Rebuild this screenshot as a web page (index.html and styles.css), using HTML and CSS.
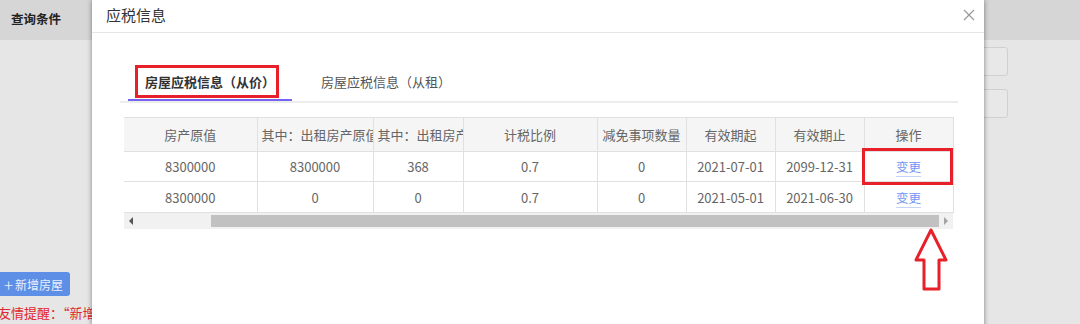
FILE: index.html
```html
<!DOCTYPE html>
<html lang="zh-CN">
<head>
    <meta charset="UTF-8">
    <title>应税信息</title>
    <link rel="stylesheet" href="styles.css">
</head>
<body>
    <!-- page behind the dialog -->
    <div class="page">
        <div class="page-head">查询条件</div>
        <div class="form-area">
            <div class="field"></div>
            <div class="field"></div>
        </div>
        <button class="add-btn"><span class="plus">+</span>新增房屋</button>
        <p class="tip">友情提醒：“新增房屋”后请及时完善房屋应税信息</p>
    </div>

    <!-- dialog -->
    <div class="modal">
        <div class="modal-head">
            <span class="modal-title">应税信息</span>
            <svg class="close" width="12" height="12" viewBox="0 0 12 12">
                <path d="M1 1L11 11M11 1L1 11" stroke="#9a9a9a" stroke-width="1.2" fill="none"/>
            </svg>
        </div>
        <div class="modal-body">
            <div class="tabs">
                <div class="tab active">房屋应税信息（从价）<span class="mark tab-mark"></span></div>
                <div class="tab">房屋应税信息（从租）</div>
            </div>

            <div class="grid-wrap">
                <table class="grid">
                    <colgroup>
                        <col style="width:133px">
                        <col style="width:116px">
                        <col style="width:90px">
                        <col style="width:134px">
                        <col style="width:89px">
                        <col style="width:89px">
                        <col style="width:89px">
                        <col style="width:89px">
                    </colgroup>
                    <thead>
                        <tr>
                            <th>房产原值</th>
                            <th class="clip">其中：出租房产原值</th>
                            <th class="clip">其中：出租房产面积</th>
                            <th>计税比例</th>
                            <th>减免事项数量</th>
                            <th>有效期起</th>
                            <th>有效期止</th>
                            <th>操作</th>
                        </tr>
                    </thead>
                    <tbody>
                        <tr class="row-a">
                            <td>8300000</td>
                            <td>8300000</td>
                            <td>368</td>
                            <td>0.7</td>
                            <td>0</td>
                            <td>2021-07-01</td>
                            <td>2099-12-31</td>
                            <td><a class="op" href="#">变更</a></td>
                        </tr>
                        <tr class="row-b">
                            <td>8300000</td>
                            <td>0</td>
                            <td>0</td>
                            <td>0.7</td>
                            <td>0</td>
                            <td>2021-05-01</td>
                            <td>2021-06-30</td>
                            <td><a class="op" href="#">变更</a></td>
                        </tr>
                    </tbody>
                </table>
                <div class="hscroll">
                    <span class="arrow-left"></span>
                    <div class="thumb"></div>
                    <span class="arrow-right"></span>
                </div>
                <span class="mark cell-mark"></span>
                <svg class="up-arrow" width="36" height="66" viewBox="0 0 36 66">
                    <polygon points="18,3 33,33 26,33 26,62 11,62 11,33 3,33" fill="#fff" stroke="#e8202a" stroke-width="3" stroke-linejoin="round"/>
                </svg>
            </div>
        </div>
    </div>
</body>
</html>
```

FILE: styles.css
```css
body {
    margin: 0;
    font-family: "Noto Sans CJK SC", "Noto Sans", sans-serif;
    background-color: #e6e6e6;
    overflow: hidden;
    height: 324px;
    position: relative;
}

.page {
    height: 324px;
}

.page-head {
    height: 40px;
    line-height: 38px;
    padding-left: 11px;
    background-color: #d6d6d6;
    font-size: 12.5px;
    font-weight: bold;
    color: #222;
}

.form-area {
    display: flex;
    flex-direction: column;
    align-items: flex-end;
    gap: 13px;
    padding: 7px 72px 0 0;
}

.field {
    width: 200px;
    height: 27px;
    border: 1px solid #d0d0d0;
    border-radius: 3px;
    background-color: #e8e8e8;
}

.add-btn {
    display: flex;
    align-items: center;
    margin-top: 154px;
    margin-left: -4px;
    height: 24px;
    width: 74px;
    padding: 0 0 0 8px;
    border: none;
    border-radius: 3px;
    background-color: #5e8fe6;
    color: #e8eefc;
    font-family: inherit;
    font-size: 12px;
}

.plus {
    font-size: 17px;
    font-weight: 300;
    margin-right: 2px;
    line-height: 1;
}

.tip {
    margin: 7px 0 0 -2px;
    font-size: 13px;
    color: #e0282e;
    white-space: nowrap;
}

/* dialog */
.modal {
    position: absolute;
    left: 92px;
    top: 0;
    width: 892px;
    height: 340px;
    background-color: #fff;
    box-shadow: 0 0 5px rgba(0, 0, 0, 0.45);
}

.modal-head {
    height: 33px;
    border-bottom: 1px solid #e6e6e6;
    display: flex;
    align-items: center;
    justify-content: space-between;
    padding: 0 9px 0 14px;
    box-sizing: border-box;
}

.modal-title {
    font-size: 15px;
    color: #333;
    margin-top: -3px;
}

.close {
    margin-top: -3px;
}

.modal-body {
    padding: 0 26px 0 28px;
}

.tabs {
    display: flex;
    gap: 12px;
    margin-top: 32px;
    padding-left: 8px;
    border-bottom: 2px solid #ececec;
}

.tab {
    position: relative;
    height: 36px;
    line-height: 34px;
    padding: 0 17px;
    font-size: 13px;
    color: #555;
    white-space: nowrap;
}

.tab.active {
    font-weight: bold;
    color: #333;
    box-shadow: inset 0 -2px 0 #7466f0;
}

.mark {
    position: absolute;
    border: 3px solid #e8202a;
    box-sizing: border-box;
}

.tab-mark {
    left: 7px;
    top: 0;
    width: 144px;
    height: 33px;
}

.grid-wrap {
    position: relative;
    margin: 14px 5px 0 4px;
    width: 829px;
    overflow: visible;
}

.grid {
    width: 829px;
    table-layout: fixed;
    border-collapse: collapse;
    font-size: 13px;
    color: #666;
}

.grid th,
.grid td {
    border: 1px solid #e0e0e0;
    text-align: center;
    padding: 0 4px;
    white-space: nowrap;
    overflow: hidden;
}

.grid th:first-child,
.grid td:first-child {
    border-left: none;
}

.grid th {
    height: 33px;
    background-color: #f5f5f5;
    font-weight: normal;
}

.grid th.clip {
    text-align: left;
}

.row-a td {
    height: 29px;
}

.row-b td {
    height: 30px;
}

.op {
    color: #6f94f2;
    font-size: 12.5px;
    text-decoration: none;
    border-bottom: 1px solid #c6d4f8;
}

.hscroll {
    display: flex;
    align-items: center;
    height: 16px;
    background-color: #f1f1f1;
}

.arrow-left,
.arrow-right {
    width: 0;
    height: 0;
    border-top: 4px solid transparent;
    border-bottom: 4px solid transparent;
}

.arrow-left {
    border-right: 4px solid #555;
    margin: 0 78px 0 5px;
}

.arrow-right {
    border-left: 4px solid #a3a3a3;
    margin: 0 5px 0 auto;
}

.thumb {
    width: 728px;
    height: 12px;
    background-color: #c1c1c1;
}

.cell-mark {
    left: 738px;
    top: 31px;
    width: 91px;
    height: 37px;
}

.up-arrow {
    position: absolute;
    left: 789px;
    top: 110px;
}
```
